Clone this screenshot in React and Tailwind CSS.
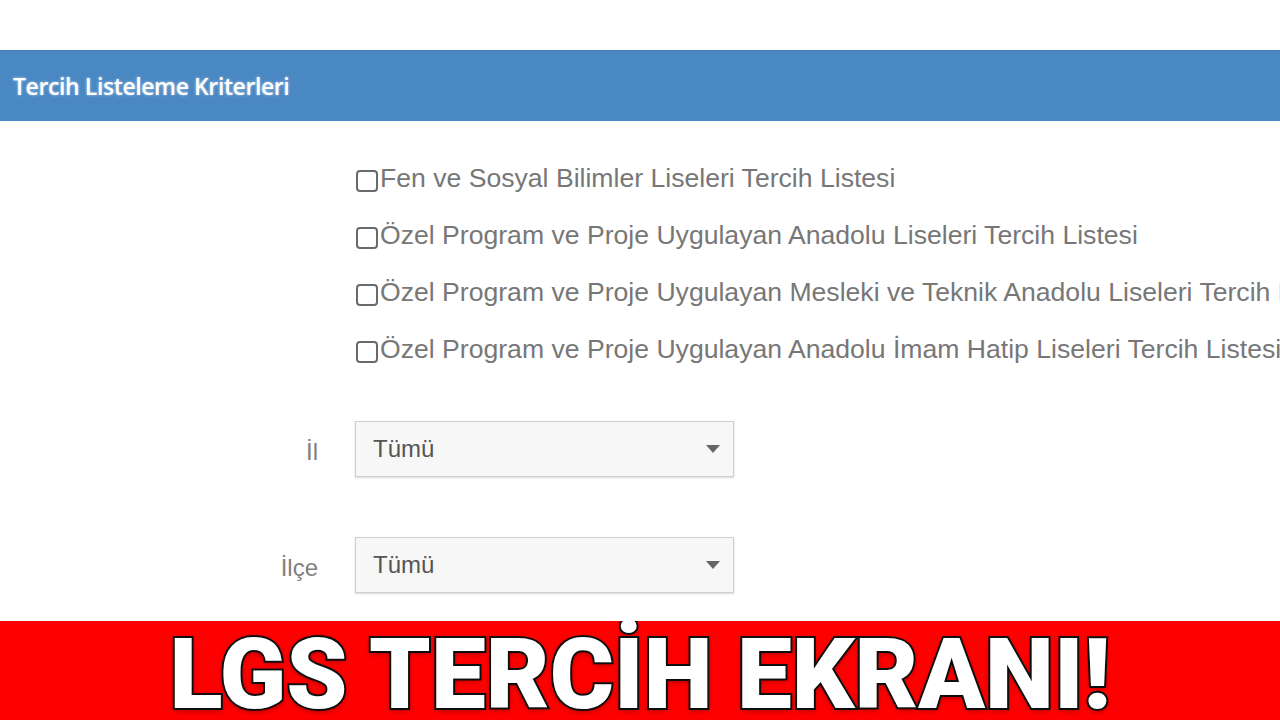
import React from "react";

const items = [
  "Fen ve Sosyal Bilimler Liseleri Tercih Listesi",
  "Özel Program ve Proje Uygulayan Anadolu Liseleri Tercih Listesi",
  "Özel Program ve Proje Uygulayan Mesleki ve Teknik Anadolu Liseleri Tercih Listesi",
  "Özel Program ve Proje Uygulayan Anadolu İmam Hatip Liseleri Tercih Listesi",
];

function Select() {
  return (
    <div className="w-[379px] h-[56px] border border-[#cfcfcf] bg-[#f7f7f7] shadow-[0_1px_2px_rgba(0,0,0,0.15)] flex items-center justify-between pl-[17px] pr-[12px]">
      <span className="text-[24px] text-[#555]">Tümü</span>
      <svg width="16" height="10" viewBox="0 0 16 10"><path d="M1 1 L15 1 L8 9 Z" fill="#666" /></svg>
    </div>
  );
}

export default function App() {
  return (
    <div className="w-[1280px] h-[720px] overflow-hidden bg-white flex flex-col font-['Liberation_Sans',Arial,sans-serif]">
      <div className="h-[50px] bg-white" />
      <div className="h-[71px] bg-[#4a88c3] border-t border-[#3f7cb6] flex items-center pl-[13px]">
        <span className="font-['Open_Sans',sans-serif] font-semibold text-[23px] text-white tracking-[-0.4px] [text-shadow:0_0_3px_rgba(255,255,255,0.6)]">Tercih Listeleme Kriterleri</span>
      </div>
      <div className="flex-1 flex flex-col pt-[29px]">
        <div className="flex flex-col pl-[356px]">
          {items.map((t) => (
            <div key={t} className="h-[57px] flex items-center whitespace-nowrap overflow-hidden">
              <span className="w-[22px] h-[22px] border-2 border-[#6a6a6a] rounded-[4px] mr-[2px] shrink-0 mt-[4px]" />
              <span className="text-[26.6px] text-[#777]">{t}</span>
            </div>
          ))}
        </div>
        <div className="flex items-center mt-[43px]">
          <div className="w-[318px] text-right text-[24px] text-[#808080] pt-[6px]">İl</div>
          <div className="ml-[37px]"><Select /></div>
        </div>
        <div className="flex items-center mt-[60px]">
          <div className="w-[318px] text-right text-[24px] text-[#808080] pt-[6px]">İlçe</div>
          <div className="ml-[37px]"><Select /></div>
        </div>
      </div>
      <div className="h-[99px] bg-[#ff0000] flex items-center justify-center overflow-hidden">
        <span className="font-['Roboto',sans-serif] font-black text-[98px] leading-none text-white [-webkit-text-stroke:4px_#111] [paint-order:stroke_fill] inline-block mt-[8px] whitespace-nowrap [text-shadow:0_2px_6px_rgba(0,0,0,0.4)]">LGS TERCİH EKRANI!</span>
      </div>
    </div>
  );
}
